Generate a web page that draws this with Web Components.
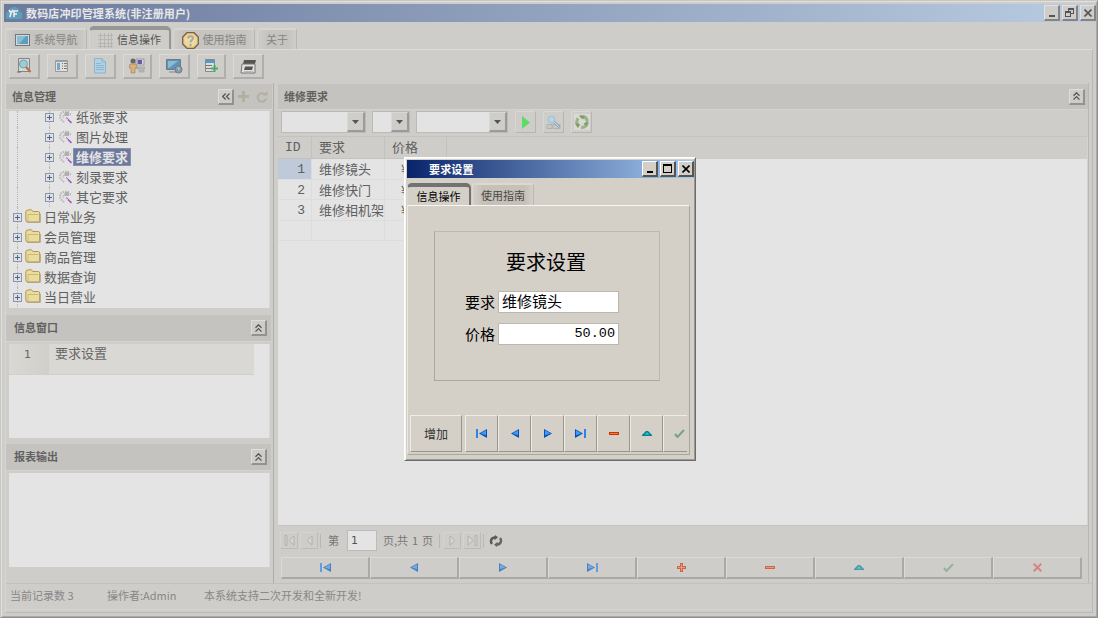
<!DOCTYPE html>
<html lang="zh-CN"><head><meta charset="utf-8"><title>数码店冲印管理系统</title>
<style>
html,body{margin:0;height:100%;overflow:hidden}
body{font:11px/1.2 "Noto Sans CJK SC","Liberation Sans",sans-serif;background:#cecdc9;color:#666}
</style></head><body>
<main-window></main-window>
<script>
const define=(name,html,setup)=>customElements.define(name,class extends HTMLElement{
  constructor(){super();this.attachShadow({mode:'open'});}
  connectedCallback(){
    if(this.ready)return;this.ready=true;
    const t=document.createElement('template');
    t.innerHTML='<style>*{box-sizing:border-box}:host{display:block;box-sizing:border-box}</style>'+(typeof html==='function'?html(this):html);
    this.shadowRoot.append(t.content.cloneNode(true));
    if(setup)setup(this);
  }
});

/* glyph library: [width, height, svg body] */
const dk='#0a4fb0';
const ICONS={
 first:[11,9,`<path d="M0 0h2v9H0z" fill="#2a84ee"/><path d="M11 0v9L3 4.5z" fill="${dk}"/><path d="M10 1.2v5L4.500 4.5z" fill="#3c9bff"/>`],
 prev:[8,9,`<path d="M8 0v9L0 4.5z" fill="${dk}"/><path d="M7 1.2v5L1.500 4.5z" fill="#3c9bff"/>`],
 next:[8,9,`<path d="M0 0v9l8-4.5z" fill="${dk}"/><path d="M1 1.2v5l5.500-1.700z" fill="#3c9bff"/>`],
 last:[11,9,`<path d="M9 0h2v9H9z" fill="#2a84ee"/><path d="M0 0v9l8-4.5z" fill="${dk}"/><path d="M1 1.2v5l5.500-1.700z" fill="#3c9bff"/>`],
 plus:[9,9,`<path d="M3 0h3v3h3v3H6v3H3V6H0V3h3z" fill="#c8300c"/><path d="M4 1h1v3h3v1H5v3H4V5H1V4h3z" fill="#f68a3c"/>`],
 minus:[10,3,`<path d="M0 0h10v3H0z" fill="#c8300c"/><path d="M1 1h8v1H1z" fill="#ff8020"/>`],
 up:[10,5,`<path d="M0 5V4l4-4h2l4 4v1z" fill="#067f90"/><path d="M2.500 3.800L5 1l2.500 2.800z" fill="#1fc4d8"/>`],
 check:[11,9,`<path d="M1 5l2.500 3L10 1" fill="none" stroke="#74a583" stroke-width="2"/>`],
 cross:[9,9,`<path d="M.7.7l7.600 7.600M8.300.7L.7 8.300" fill="none" stroke="#d8605c" stroke-width="2"/>`],
 gfirst:[11,11,`<path d="M1 .5h2v10H1z" fill="#d7d6d3" stroke="#b1b0ad"/><path d="M10 .8v9.400L5 5.500z" fill="#d7d6d3" stroke="#b1b0ad"/>`],
 gprev:[7,11,`<path d="M6 .8v9.400L1 5.500z" fill="#d7d6d3" stroke="#b1b0ad"/>`],
 gnext:[7,11,`<path d="M1 .8v9.400l5-4.700z" fill="#d7d6d3" stroke="#b1b0ad"/>`],
 glast:[11,11,`<path d="M8 .5h2v10H8z" fill="#d7d6d3" stroke="#b1b0ad"/><path d="M1 .8v9.400l5-4.700z" fill="#d7d6d3" stroke="#b1b0ad"/>`],
 reload:[14,12,`<path d="M3 9C.8 6 2.500 2.500 6 2.500" fill="none" stroke="#585858" stroke-width="2.400"/><path d="M6 0l3 2.200-3.500 3z" fill="#585858"/><path d="M11 3C13.200 6 11.500 9.500 8 9.500" fill="none" stroke="#666" stroke-width="2.400"/><path d="M8 12L5 9.800l3.500-3z" fill="#666"/>`],
 chev:[7,8,`<path d="M.5 3.800l3-3 3 3M.5 7.600l3-3 3 3" fill="none" stroke="#555" stroke-width="1.300"/>`],
 left:[8,7,`<path d="M3.700.5l-3 3 3 3M7.500.5l-3 3 3 3" fill="none" stroke="#555" stroke-width="1.200"/>`],
 add:[11,11,`<path d="M4 0h3v4h4v3H7v4H4V7H0V4h4z" fill="#b5afa3"/>`],
 redo:[12,12,`<path d="M8.500 3.200A4.200 4.200 0 1 0 10 7.500" fill="none" stroke="#b5afa3" stroke-width="2"/><path d="M6.500 4.500h5V0z" fill="#b5afa3"/>`],
 down:[7,4,`<path d="M0 0h7L3.500 4z" fill="#555"/>`],
 box:[9,9,`<rect x=".5" y=".5" width="8" height="8" fill="#dde1e8" stroke="#8c96a5"/><path d="M2 4.500h5M4.500 2v5" stroke="#536580" fill="none"/>`],
 wand:[14,14,`<g fill="none" stroke="#b9b9b9" stroke-width="2" stroke-dasharray="1.500 1"><path d="M11 2C7 1 2.500 2 2 5.500S4 10 6 12M13 4.500C9 3 5 4 5 8"/></g><path d="M7 2h4v4H6z" fill="#b0b0b0"/><path d="M8 7.500l5.500 5.500" stroke="#a55bc4" stroke-width="1.700"/><path d="M6 5.500l4 4.500" stroke="#eee" stroke-width=".8"/>`],
 folder:[16,14,`<path d="M.8 11V3Q1 1 3 1l3-.4L8 2.500h5.500q1.200.2 1.200 1.500v8q0 1-1.200 1H3Q.8 13 .8 11z" fill="#e9dd9d" stroke="#b8935a"/><path d="M3 12V5.500h10" fill="none" stroke="#c7ae69" stroke-width=".8"/><path d="M2 13.400h13.400V5" fill="none" stroke="#a39577" stroke-width=".7"/>`],
 screen:[15,12,`<rect x=".5" y=".5" width="14" height="11" fill="#d4d8d9" stroke="#6f787e"/><path d="M2 2h11v8H2z" fill="#5d9dbd"/><path d="M2 2h9L4 10H2z" fill="#8bbdd2"/>`],
 gridi:[15,15,`<path d="M0 2.500h15M0 6.500h15M0 10.500h15M2.500 0v15M6.500 0v15M10.500 0v15M13.500 0v15M0 13.500h15" stroke="#b0b0ae" stroke-width=".8"/>`],
 help:[17,17,`<path d="M5 .7h7L16.300 5v7L12 16.300H5L.7 12V5z" fill="#ead28b" stroke="#7a5f50" stroke-width="1.300"/><circle cx="8.500" cy="8.500" r="5.500" fill="#ecdca4"/><path d="M6 6.500c0-3 5-3 5-.3C11 8 8.500 8 8.500 10.500" fill="none" stroke="#a8a8a8" stroke-width="2"/><circle cx="8.500" cy="13" r="1.200" fill="#a8a8a8"/>`],
 t0:[16,16,`<path d="M2.500.5h11v13h-11z" fill="#d4d8d8" stroke="#808586"/><circle cx="7.500" cy="6" r="4" fill="#91d0dc" stroke="#8a9aa0"/><path d="M10 9l4.500 5" stroke="#c07048" stroke-width="2.400"/><path d="M1 14h4" stroke="#666"/>`],
 t1:[14,12,`<path d="M.5.5h12v11H.5z" fill="#dfdfdd" stroke="#999"/><path d="M2 3h3v7H2z" fill="#79a8c3"/><path d="M7 3.500h1m1 0h3M7 6h1m1 0h3M7 8.500h1m1 0h3" stroke="#777"/><path d="M1 1.500h11" stroke="#92aab8"/>`],
 t2:[14,16,`<path d="M1.500.5H9L12.500 4v11h-11z" fill="#aed3e6" stroke="#8fb3cb"/><path d="M9 .5V4h4M3 5.500h5M3 7.500h8M3 9.500h8M3 11.500h8" stroke="#8fb4cd" fill="none"/>`],
 t3:[16,16,`<path d="M7 1h8v6H7z" fill="#ddd" stroke="#999"/><path d="M8.500 2H13v4H8.500z" fill="#6559a9"/><path d="M8 9h8v2H8zM10 12h5v2h-5z" fill="#b8b9bf" stroke="#999" stroke-width=".5"/><circle cx="4" cy="3" r="2.500" fill="#666"/><path d="M1 6h6l1 4H6v5H2v-5H0z" fill="#d9b17d" stroke="#9a7c58" stroke-width=".6"/>`],
 t4:[17,15,`<path d="M.5.5h14v10H.5z" fill="#5c95b5" stroke="#707880"/><path d="M2 2h10L3 9H2z" fill="#8cbbd0"/><path d="M3 12h7v2H3z" fill="#aaa"/><circle cx="12.500" cy="10.500" r="3.600" fill="#65a8b5" stroke="#9b65a0"/><path d="M11 8l3 1-1 3" fill="#d8c94f"/>`],
 t5:[14,14,`<path d="M1.500.5h9v12h-9z" fill="#dcdcd8" stroke="#888"/><path d="M1 1h10v3H1z" fill="#5899c0"/><path d="M2 6.500h6M2 9.500h5" stroke="#777"/><path d="M10.500 6v7M7 9.500h7" stroke="#4daa68" stroke-width="2"/>`],
 t6:[17,15,`<path d="M4 1h12l-1 4H3z" fill="#555"/><path d="M2 5h13v9H1z" fill="#e0e0de" stroke="#777"/><path d="M5 7.500h8l-1 3.500H4z" fill="#555"/><path d="M4 12.500h9" stroke="#bbb"/>`],
 play:[8,13,`<path d="M0 0v13l8-6.500z" fill="#5edb65"/>`],
 find:[15,15,`<path d="M1 9.500h5v4H1zM7 9.500h7v4H7z" fill="#c8c8c6" stroke="#b0b0ae"/><path d="M7 6l6.500 6" stroke="#8f9fb8" stroke-width="2.600"/><path d="M7 6l6 5.500" stroke="#dfe5ee" stroke-width="1"/><circle cx="5.500" cy="4.500" r="3.300" fill="#b3d6e4" stroke="#9cc0d2"/>`],
 cyc:[16,16,`<path d="M0 0h16v16H0z" fill="#d9d9d6"/><circle cx="8" cy="8" r="5.300" fill="none" stroke="#9db387" stroke-width="3.200" stroke-dasharray="9.100 2"/><path d="M5 1.500l6 .5-2 3.500zM14.500 6l-2 6-3-2zM1 9l5 1-2 4z" fill="#7d9e6c"/>`],
 min:[8,8,`<path d="M1 6h6v2H1z" fill="currentColor"/>`],
 max:[9,9,`<path d="M0 0h9v9H0zM1 2v6h7V2z" fill="currentColor" fill-rule="evenodd"/>`],
 rest:[9,9,`<path d="M3 0h6v6H6V5h2V2H4v1H3z" fill="currentColor"/><path d="M0 3h6v6H0zM1 5v3h4V5z" fill="currentColor" fill-rule="evenodd"/>`],
 close:[8,8,`<path d="M.5.5l7 7M7.500.5l-7 7" stroke="currentColor" stroke-width="1.600"/>`],
 logo:[16,12,`<path d="M3 12a3.500 3.500 0 0 1-1-7Q4 0 8 0q5 0 6 5a3 3 0 0 1-1 7z" fill="#5f9ebb"/><path d="M3 3l2 3 2-3M5 6l-1 4M8 10V4h4M8 7h3" stroke="#eee" stroke-width="1.600" fill="none"/>`]
};
define('ui-icon',el=>{const[w,h,s]=ICONS[el.getAttribute('name')];
 return `<style>:host{flex:none;width:${w}px;height:${h}px}svg{display:block}</style><svg width="${w}" height="${h}" viewBox="0 0 ${w} ${h}">${s}</svg>`});

define('push-button',`<style>:host{display:flex;align-items:center;justify-content:center;flex:none;background:var(--face,#cecdc9);border:1px solid;border-color:var(--hi,#dbdad7) var(--lo,#aaa9a6) var(--lo,#aaa9a6) var(--hi,#dbdad7);border-right-width:var(--edge,2px);border-bottom-width:var(--edge,2px)}</style><slot></slot>`);

define('title-bar',el=>`<style>:host{display:flex;align-items:center;height:18px;font-weight:bold;white-space:nowrap}
.t{flex:1;padding:2px 0 0 4px;letter-spacing:.13px}.b{display:flex;gap:2px}push-button{width:16px;height:16px;color:#555;--face:#cecdc9;--hi:#e2e1de;--lo:#858482}
:host([active]) push-button{color:#000;--face:#d4d0c8;--hi:#fff;--lo:#555}</style>
<slot name="icon"></slot><div class="t"><slot></slot></div><div class="b"><push-button><ui-icon name="min"></ui-icon></push-button><push-button><ui-icon name="${el.hasAttribute('active')?'max':'rest'}"></ui-icon></push-button><push-button><ui-icon name="close"></ui-icon></push-button></div>`);

define('tab-item',`<style>:host{display:flex;align-items:center;justify-content:center;gap:4px;height:21px;flex:none;color:var(--c,#858583);background:linear-gradient(90deg,var(--a,#cecdc9),var(--b,#c6c4c0) 10px calc(100% - 8px),var(--a,#cecdc9));border-top:2px solid var(--t,#d6d5d2);border-left:1px solid var(--t,#d6d5d2);border-right:1px solid #b9b8b4;border-radius:3px 3px 0 0;white-space:nowrap}
:host([on]){background:var(--a,#cecdc9);border:3px solid var(--o,#969693);border-top-width:4px;border-left:1px solid var(--t,#d6d5d2);border-right-width:2px;border-bottom:0;border-radius:5px 5px 0 0;color:var(--k,#555);height:23px}</style><slot></slot>`);

define('panel-head',`<style>:host{display:flex;align-items:center;background:#c5c3bf;border-top:1px solid #cfcecb;border-bottom:1px solid #d4d3d0;font-weight:bold;color:#616161;padding:0 4px 0 6px}
span{flex:1}::slotted(push-button){width:16px;height:16px;--hi:#dfdedb;--lo:#93928f}</style><span><slot></slot></span><slot name="tools"></slot>`);

define('tree-item',el=>{const sub=el.hasAttribute('sub');return `<style>:host{display:flex;align-items:center;height:20px;position:relative;font-size:13px;color:#606060;padding-left:${sub?36:4}px;white-space:nowrap}
.l{padding:2px 3px;line-height:14px}:host([sel]) .l{background:#6c799d;color:#e3e3e3;font-weight:bold;outline:1px solid #8791a8;outline-offset:-1px}
.i{margin:0 0 ${sub?0:2}px ${sub?4:3}px;display:flex;width:${sub?15:16}px}
.v{position:absolute;left:8px;top:0;height:20px;border-left:1px dotted #b5b5b5}.v.s{left:40px}:host(:first-child) .v{top:4px;height:16px}ui-icon{position:relative}</style>
<div class="v"></div>${sub?'<div class="v s"></div>':''}<ui-icon name="box"></ui-icon><div class="i"><ui-icon name="${sub?'wand':'folder'}"></ui-icon></div><div class="l"><slot></slot></div>`});

define('combo-box',`<style>:host{display:flex;height:22px;border:1px solid #bbbab6;background:#e3e3e3;justify-content:flex-end;flex:none}push-button{width:18px;height:20px;--hi:#d9d8d5;--lo:#9c9b98}</style><push-button><ui-icon name="down"></ui-icon></push-button>`);

define('side-bar',`<style>:host{display:grid;grid-template-rows:27px 204px 28px 101px 28px 1fr;width:268px;border-right:1px solid #aeada9}
.w{margin:2px 3px 0 3px;background:#e4e4e4;border-right:1px solid #d8d8d5}.tree{height:197px;margin-top:1px;display:flex;flex-direction:column}.tree>*{flex:none}.tree>:first-child{margin-top:-4px}
.mid,.bot{height:94px}panel-head{margin:0 1px 0 0}.one{padding-right:4px}.row{display:grid;grid-template-columns:40px 1fr;width:245px;height:31px;background:#d9d8d4;font-size:13px;padding-top:1px;border-bottom:1px solid #d1d0cc}.row b{font:11px "DejaVu Sans";background:linear-gradient(90deg,#d9d8d4,#d0cfca);margin-top:-1px;padding:4px 0 0 15px}.row span{padding-left:6px;color:#666}
.h2{padding-left:8px;margin-right:2px}</style>
<panel-head class="one">信息管理<push-button slot="tools"><ui-icon name="left"></ui-icon></push-button><ui-icon slot="tools" style="margin-left:4px" name="add"></ui-icon><ui-icon slot="tools" style="margin-left:7px" name="redo"></ui-icon></panel-head>
<div class="w tree"><tree-item sub>纸张要求</tree-item><tree-item sub>图片处理</tree-item><tree-item sub sel>维修要求</tree-item><tree-item sub>刻录要求</tree-item><tree-item sub>其它要求</tree-item><tree-item>日常业务</tree-item><tree-item>会员管理</tree-item><tree-item>商品管理</tree-item><tree-item>数据查询</tree-item><tree-item>当日营业</tree-item></div>
<panel-head class="h2">信息窗口<push-button slot="tools"><ui-icon name="chev"></ui-icon></push-button></panel-head>
<div class="w mid"><div class="row"><b>1</b><span>要求设置</span></div></div>
<panel-head class="h2">报表输出<push-button slot="tools"><ui-icon name="chev"></ui-icon></push-button></panel-head>
<div class="w bot"></div>`);

define('data-view',`<style>:host{display:grid;grid-template-rows:27px 26px 389px 30px 1fr;width:811px;border-right:1px solid #b9b8b4}
panel-head{padding-right:3px}.tools{display:flex;align-items:flex-start;padding:1px 0 0 3px}.tools combo-box+combo-box{margin-left:6px}.tools push-button{width:21px;height:22px;margin-left:7px;--hi:#d8d7d4;--lo:#b6b5b2;--edge:1px}
.g{background:#e4e4e4;border-right:1px solid #d3d3d0;font:13px "Noto Sans CJK SC",sans-serif;color:#606060}
.r{display:grid;grid-template-columns:34px 73px 62px 1fr;height:20.500px;align-items:center;white-space:nowrap}.r>*{height:100%;line-height:19px;border-right:1px solid #dcdcda;border-bottom:1px solid #dddddb;padding-left:7px;overflow:hidden}
.r>:nth-child(4){border:0}.r>:first-child{text-align:right;padding-right:6px}.r>:nth-child(3){padding-left:16px}.h{height:23px;background:#cecdc9;border-top:1px solid #c4c3bf}.h>*{border-color:#c3c2be!important;padding-left:7px!important;line-height:20px}.h>:first-child{text-align:left}.m{font-family:"Liberation Mono",monospace}.r>.m{line-height:21px}.on>:first-child{background:#bec9da}
.p{display:flex;align-items:center;font-size:11px;color:#777;border-top:1px solid #c3c2be;padding-left:2px}.p push-button{width:18px;height:17px;--hi:#d4d3d0;--lo:#bdbcb9;--edge:1px}.p i{width:1px;height:14px;background:#b9b8b4}.in{width:30px;height:21px;background:#e4e4e4;border:1px solid #bbb;padding:1px 3px;font:11px/17px "DejaVu Sans";color:#555}
.nav{display:flex;padding:2px 0 0 3px;align-items:start}.nav push-button{width:89px;height:22px}.nav ui-icon{opacity:.65}</style>
<panel-head>维修要求<push-button slot="tools"><ui-icon name="chev"></ui-icon></push-button></panel-head>
<div class="tools"><combo-box style="width:85px"></combo-box><combo-box style="width:38px"></combo-box><combo-box style="width:92px"></combo-box><push-button><ui-icon name="play"></ui-icon></push-button><push-button><ui-icon name="find"></ui-icon></push-button><push-button><ui-icon name="cyc"></ui-icon></push-button></div>
<div class="g"><div class="r h"><span class="m">ID</span><span>要求</span><span>价格</span><span></span></div>
<div class="r on"><span class="m">1</span><span>维修镜头</span><span>¥</span><span></span></div><div class="r"><span class="m">2</span><span>维修快门</span><span>¥</span><span></span></div><div class="r"><span class="m">3</span><span>维修相机架</span><span>¥</span><span></span></div><div class="r"><span></span><span></span><span></span><span></span></div></div>
<div class="p"><push-button><ui-icon name="gfirst"></ui-icon></push-button><push-button style="margin-left:2px"><ui-icon name="gprev"></ui-icon></push-button><i style="margin:0 7px 0 2px"></i><span>第</span><div class="in" style="margin:0 6px 0 8px">1</div><span style="word-spacing:1.500px">页,共 1 页</span><i style="margin:0 3px 0 6px"></i><push-button><ui-icon name="gnext"></ui-icon></push-button><push-button style="margin-left:2px"><ui-icon name="glast"></ui-icon></push-button><i style="margin:0 5px 0 2px"></i><ui-icon name="reload"></ui-icon></div>
<div class="nav"></div>`,
 el=>{el.shadowRoot.querySelector('.nav').innerHTML=['first','prev','next','last','plus','minus','up','check','cross'].map(n=>`<push-button><ui-icon name="${n}"></ui-icon></push-button>`).join('')});

define('settings-dialog',`<style>:host{position:absolute;left:403px;top:156px;width:292px;height:304px;background:#d4d0c8;border:1px solid;border-color:#fff #6b6b6b #6b6b6b #fff;padding:2px 1px 1px;box-shadow:inset 1px 1px #f7f6f4,inset -1px -1px #9a9995;color:#000}
title-bar{margin:0 0 0 1px;color:#fff;background:linear-gradient(90deg,#0a246a,#a6caf0);padding:0 0 0 18px;height:18px}
.tabs{display:flex;align-items:flex-end;height:27px;margin:0 5px 0 1px;--a:#d4d0c8;--b:#c6c1b8;--t:#ddd9d2;--c:#4b4945;--k:#000;--o:#707370}.tabs tab-item{height:22px;padding-top:1px}
.page{height:250px;margin:0 4px 0 1px;border:1px solid #aaa79f;border-left-color:#e9e6df;border-top-color:#f7f5f0;display:flex;flex-direction:column}
.group{width:226px;height:150px;margin:25px 0 0 26px;border:1px solid #aaa79f;border-right-color:#bdb9b2;border-top-color:#bdb9b2;padding:15px 0 0 30px}
h1{font:20px/30px "Noto Sans CJK SC",sans-serif;margin:0 0 14px 41px}.f{display:flex;font:15px/22px "Noto Sans CJK SC",sans-serif;margin-bottom:10px}.f>div{width:121px;height:22px;margin-left:3px;background:#fff;border:1px solid #bbb8b2;padding:0 3px;line-height:17px}.f>.n{font:13.500px/19px "Liberation Mono",monospace;text-align:right}
.bar{display:flex;margin:34px 2px 0 2px;overflow:hidden;--face:#d4d0c8;--hi:#efece5;--lo:#99968f}.bar push-button{width:33px;height:37px;--edge:1px}.bar .a{width:52px;margin-right:3px;font-size:12px;color:#333;padding-top:2px}</style>
<title-bar active>要求设置</title-bar><div class="tabs"><tab-item on style="width:64px">信息操作</tab-item><tab-item style="width:62px;margin-left:1px">使用指南</tab-item></div>
<div class="page"><div class="group"><h1>要求设置</h1><div class="f">要求<div>维修镜头</div></div><div class="f">价格<div class="n">50.00</div></div></div>
<div class="bar"><push-button class="a">增加</push-button>${['first','prev','next','last','minus','up','check'].map(n=>`<push-button><ui-icon name="${n}"></ui-icon></push-button>`).join('')}</div></div>`);

define('main-window',`<style>:host{position:relative;width:1098px;height:618px;background:#cecdc9;border:1px solid;border-color:#c7c6c3 #8f8f8e #8f8f8e #c7c6c3;padding:3px 3px 0;overflow:hidden;box-shadow:inset 1px 1px #e1e1df,inset -1px -1px #aaa9a8}
.top{background:linear-gradient(90deg,#6c7a9e,#b8cce0);color:#e8e8e8;padding:0 0 0 2px;margin-right:-2px}
.tabs{display:flex;align-items:flex-end;height:27px;padding-left:1px;gap:2px}.tabs tab-item{padding-top:1px}.body{border:1px solid #b9b8b4;border-left-color:#d8d7d4;border-top-color:#dddcd9;height:564px;margin:0 1px}
.tools{display:flex;height:33px;padding:4px 0 0 3px;align-items:start;gap:7px}.tools push-button{width:31px;height:25px;--hi:#dbdad7;--lo:#b0afac}.tools push-button:nth-child(4),.tools push-button:nth-child(6){width:29px}
.cols{display:flex;gap:4px;height:500px}.status{display:flex;height:27px;border-top:1px solid #c2c1bd;border-bottom:1px solid #d4d3d0;align-items:center;color:#888;padding:0 0 1px 4px;font-size:11px}.status span{white-space:pre;flex:none}</style>
<title-bar class="top"><ui-icon slot="icon" name="logo"></ui-icon>数码店冲印管理系统(非注册用户)</title-bar>
<div class="tabs"><tab-item style="width:82px"><ui-icon name="screen"></ui-icon>系统导航</tab-item><tab-item on style="width:82px"><ui-icon name="gridi"></ui-icon>信息操作</tab-item><tab-item style="width:82px"><ui-icon name="help"></ui-icon>使用指南</tab-item><tab-item style="width:40px">关于</tab-item></div>
<div class="body"><div class="tools">${[0,1,2,3,4,5,6].map(n=>`<push-button><ui-icon name="t${n}"></ui-icon></push-button>`).join('')}</div>
<div class="cols"><side-bar></side-bar><data-view></data-view></div>
<div class="status"><span style="width:97px">当前记录数 3</span><span style="width:97px">操作者:Admin</span><span>本系统支持二次开发和全新开发!</span></div></div>
<settings-dialog></settings-dialog>`);
</script></body></html>
